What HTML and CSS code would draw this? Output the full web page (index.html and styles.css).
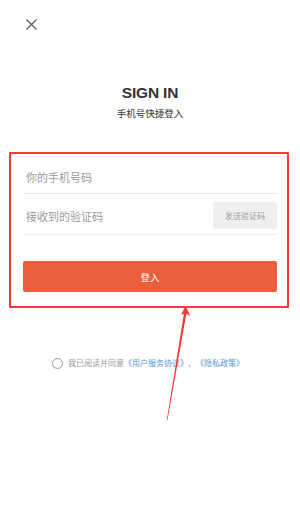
FILE: index.html
```html
<!DOCTYPE html>
<html lang="zh-CN">
<head>
<meta charset="utf-8">
<title>Sign in</title>
<link rel="stylesheet" href="styles.css">
</head>
<body>
<div class="page">
  <div class="topbar">
    <svg class="close" width="11" height="11" viewBox="0 0 11 11"><path d="M0.5 0.5 L10.5 10.5 M10.5 0.5 L0.5 10.5" stroke="#555" stroke-width="1.1" fill="none"/></svg>
  </div>
  <h1 class="title">SIGN IN</h1>
  <p class="subtitle">手机号快捷登入</p>
  <form class="form-box">
    <div class="field field-phone">
      <input class="input" type="text" placeholder="你的手机号码">
    </div>
    <div class="field field-code">
      <input class="input" type="text" placeholder="接收到的验证码">
      <button type="button" class="send-btn">发送验证码</button>
    </div>
    <button type="button" class="login-btn">登入</button>
  </form>
  <div class="agree">
    <span class="radio"></span>
    <span class="agree-text">我已阅读并同意<a class="link">《用户服务协议》</a>、<a class="link">《隐私政策》</a></span>
  </div>
  <svg class="arrow" width="300" height="524" viewBox="0 0 300 524">
    <polygon points="184.2,312 186.6,312.3 167.5,420 166.8,420" fill="#f0383a"/>
    <polygon points="185.5,306 190.5,316 185.3,313 181,315" fill="#f0383a"/>
  </svg>
</div>
</body>
</html>
```
FILE: styles.css
```css
html, body {
  margin: 0;
  padding: 0;
  background: #ffffff;
}
body {
  font-family: "Noto Sans CJK SC", "Noto Sans", sans-serif;
  color: #333;
}
.page {
  position: relative;
  width: 300px;
  height: 524px;
  overflow: hidden;
}
.topbar {
  padding: 19px 0 0 26px;
  height: 11px;
}
.close {
  display: block;
}
.title {
  margin: 54px 0 0;
  font-family: "Liberation Sans", Arial, sans-serif;
  font-weight: bold;
  font-size: 15.5px;
  line-height: 18px;
  text-align: center;
  color: #333;
  letter-spacing: -0.2px;
}
.subtitle {
  margin: 4px 0 0;
  font-size: 9.5px;
  line-height: 14px;
  text-align: center;
  color: #333;
}
.form-box {
  margin: 32px 0 0 9px;
  height: 152px;
  border: 2px solid #f23c3c;
  border-radius: 1px;
  padding: 0 10px 0 12px;
  box-sizing: content-box;
  width: 254px;
  display: flex;
  flex-direction: column;
}
.field {
  display: flex;
  align-items: center;
  border-bottom: 1px solid #e8e8e8;
}
.field-phone {
  height: 33px;
  padding-top: 6px;
}
.field-code {
  height: 37px;
  padding-top: 3px;
  border-bottom-color: #eeeeee;
}
.input {
  flex: 1;
  min-width: 0;
  border: none;
  outline: none;
  padding: 0 0 0 3px;
  margin: 0;
  font-family: "Noto Sans CJK SC", sans-serif;
  font-size: 11px;
  color: #333;
  background: transparent;
}
.input::placeholder {
  color: #9a9a9a;
}
.send-btn {
  width: 64px;
  height: 27px;
  border: none;
  border-radius: 2px;
  background: #efefef;
  color: #9c9c9c;
  font-family: "Noto Sans CJK SC", sans-serif;
  font-size: 8px;
  padding: 0;
  margin: 0;
}
.login-btn {
  margin-top: 26px;
  height: 31px;
  border: none;
  border-radius: 2px;
  background: #e95e3b;
  color: #fff;
  font-family: "Noto Sans CJK SC", sans-serif;
  font-size: 9.5px;
  padding: 0;
}
.agree {
  margin-top: 49px;
  display: flex;
  align-items: center;
  justify-content: center;
  padding-right: 4px;
}
.radio {
  width: 9px;
  height: 9px;
  border: 1px solid #9a9a9a;
  border-radius: 50%;
  margin-right: 5px;
}
.agree-text {
  font-size: 8px;
  line-height: 12px;
  color: #9a9a9a;
  text-spacing-trim: space-all;
}
.link {
  color: #5d95d6;
}
.arrow {
  position: absolute;
  left: 0;
  top: 0;
  pointer-events: none;
}
```
